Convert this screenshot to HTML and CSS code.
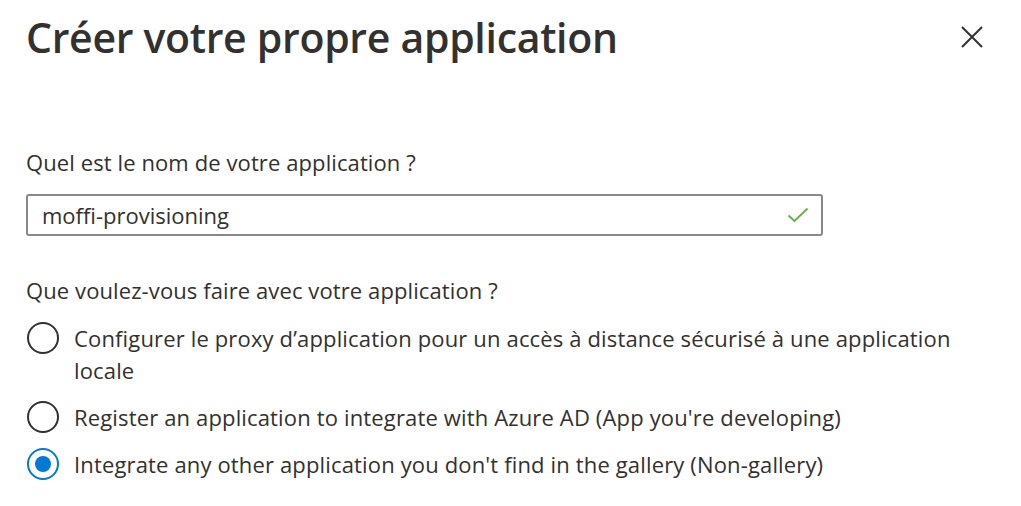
FILE: index.html
```html
<!DOCTYPE html>
<html lang="fr">
<head>
    <meta charset="UTF-8">
    <title>Créer votre propre application</title>
    <meta name="viewport" content="width=device-width, initial-scale=1">
    <link rel="stylesheet" href="styles.css">
</head>
<body>

<div class="panel">
    <div class="panel-header flex align-center justify-between">
        <h1 class="title">Créer votre propre application</h1>
        <button class="close" aria-label="Fermer">
            <svg width="24" height="24" viewBox="0 0 24 24">
                <path d="M2 2 L22 22 M22 2 L2 22" stroke="#323130" stroke-width="2" fill="none"/>
            </svg>
        </button>
    </div>

    <div class="field">
        <label class="label" for="app-name">Quel est le nom de votre application ?</label>
        <div class="input flex align-center justify-between">
            <input id="app-name" type="text" value="moffi-provisioning">
            <svg class="check" width="22" height="16" viewBox="0 0 22 16">
                <path d="M1.5 8.5 L7.5 14 L20.5 1.5" stroke="#6aae4f" stroke-width="2" fill="none"/>
            </svg>
        </div>
    </div>

    <div class="field">
        <div class="label">Que voulez-vous faire avec votre application ?</div>
        <div class="options flex flex-column">
            <label class="option flex">
                <span class="radio"></span>
                <span class="option-text">Configurer le proxy d’application pour un accès à distance sécurisé à une application locale</span>
            </label>
            <label class="option flex">
                <span class="radio"></span>
                <span class="option-text">Register an application to integrate with Azure AD (App you're developing)</span>
            </label>
            <label class="option flex">
                <span class="radio checked"></span>
                <span class="option-text">Integrate any other application you don't find in the gallery (Non-gallery)</span>
            </label>
        </div>
    </div>
</div>

</body>
</html>
```

FILE: styles.css
```css
* {
    font-family: "Open Sans", sans-serif;
    box-sizing: border-box;
}

body {
    background-color: #fff;
    margin: 0;
    color: #323130;
}

.flex {
    display: flex;
}

.flex-column {
    flex-direction: column;
}

.align-center {
    align-items: center;
}

.justify-between {
    justify-content: space-between;
}

.panel {
    padding: 9px 37px 0 26px;
}

.title {
    margin: 0;
    font-size: 41px;
    font-weight: 600;
    line-height: 56px;
    letter-spacing: -0.3px;
}

.close {
    background: none;
    border: none;
    padding: 0;
    width: 24px;
    height: 24px;
    cursor: pointer;
}

.field {
    margin-top: 81px;
}

.field + .field {
    margin-top: 38px;
}

.label {
    display: block;
    font-size: 22px;
    line-height: 32px;
    letter-spacing: 0.1px;
    margin-bottom: 16px;
}

.input {
    width: 797px;
    height: 42px;
    border: 2px solid #8a8886;
    border-radius: 3px;
    padding: 0 12px 0 14px;
}

.input input {
    border: none;
    outline: none;
    padding: 0;
    font-size: 22px;
    color: #323130;
    flex: 1;
}

.options {
    gap: 15px;
}

.option {
    align-items: flex-start;
    font-size: 22px;
    line-height: 32px;
    letter-spacing: 0.15px;
    cursor: pointer;
}

.radio {
    flex: none;
    width: 32px;
    height: 32px;
    border: 2px solid #323130;
    border-radius: 50%;
    margin: 0 15px 0 1px;
    position: relative;
}

.radio.checked {
    border-color: #0078d4;
}

.radio.checked::after {
    content: "";
    position: absolute;
    left: 6px;
    top: 6px;
    width: 16px;
    height: 16px;
    border-radius: 50%;
    background: #0078d4;
}

.option-text {
    max-width: 880px;
}
```
